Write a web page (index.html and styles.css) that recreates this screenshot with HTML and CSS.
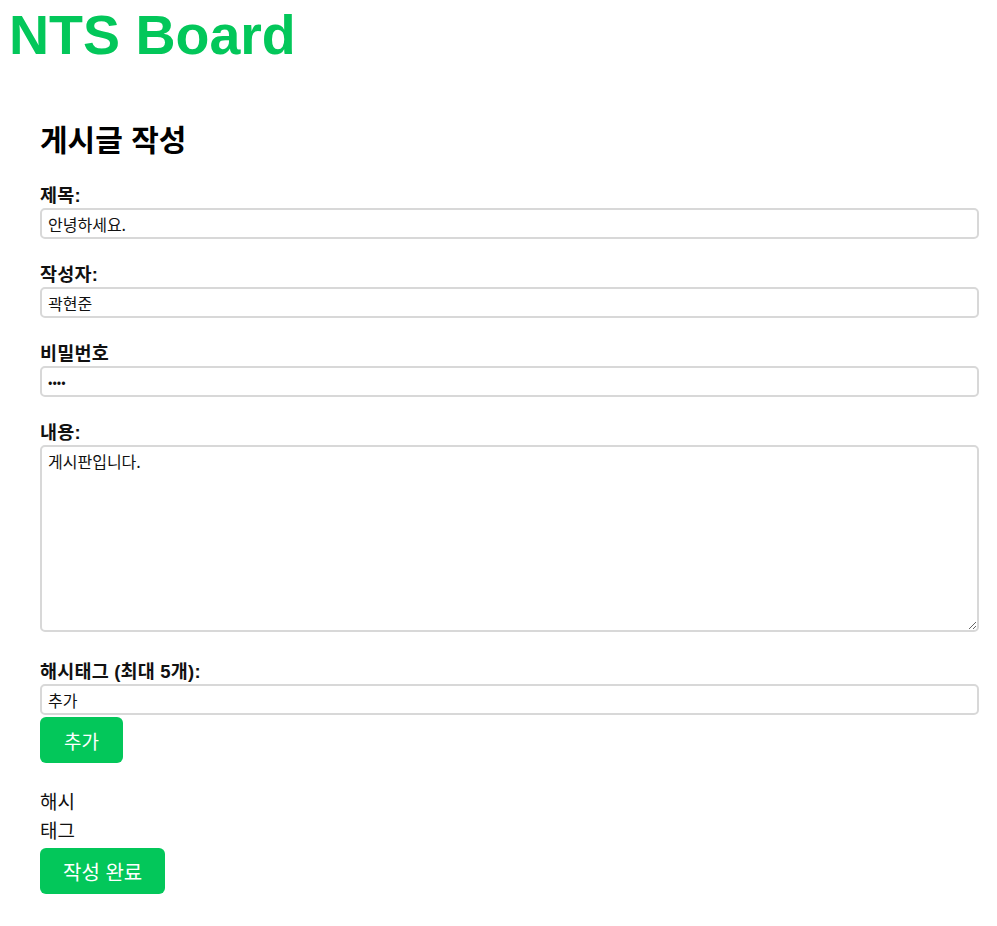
FILE: index.html
```html
<!DOCTYPE html>
<html lang="ko">
<head>
<meta charset="utf-8">
<title>NTS Board</title>
<link rel="stylesheet" href="styles.css">
</head>
<body>
<header class="site-header">
  <h1 class="logo">NTS Board</h1>
</header>
<main class="write">
  <h2 class="write-title">게시글 작성</h2>
  <form class="write-form">
    <div class="field">
      <label class="field-label" for="title">제목:</label>
      <input class="field-input" id="title" type="text" value="안녕하세요.">
    </div>
    <div class="field">
      <label class="field-label" for="writer">작성자:</label>
      <input class="field-input" id="writer" type="text" value="곽현준">
    </div>
    <div class="field">
      <label class="field-label" for="pw">비밀번호</label>
      <input class="field-input password" id="pw" type="password" value="1234">
    </div>
    <div class="field content-field">
      <label class="field-label" for="content">내용:</label>
      <textarea class="field-textarea" id="content">게시판입니다.</textarea>
    </div>
    <div class="field tag-field">
      <label class="field-label" for="tag">해시태그 (최대 5개):</label>
      <input class="field-input" id="tag" type="text" value="추가">
      <button class="btn" type="button">추가</button>
    </div>
    <ul class="tag-list">
      <li>해시</li>
      <li>태그</li>
    </ul>
    <button class="btn btn-submit" type="submit">작성 완료</button>
  </form>
</main>
</body>
</html>
```
FILE: styles.css
```css
html, body {
  margin: 0;
  padding: 0;
  background: #fff;
}
body {
  font-family: "Liberation Sans", "Noto Sans CJK KR", sans-serif;
  color: #000;
}
.site-header {
  padding: 4px 0 0 9px;
}
.logo {
  margin: 0;
  font-family: "Liberation Sans", Arial, sans-serif;
  font-size: 55.5px;
  font-weight: bold;
  line-height: 63px;
  color: #03c75a;
}
.write {
  margin: 0 18px 0 40px;
  padding-top: 53px;
}
.write-title {
  margin: 0 0 22px;
  font-size: 30px;
  font-weight: bold;
  line-height: 42px;
}
.write-form {
  display: flex;
  flex-direction: column;
}
.field {
  display: flex;
  flex-direction: column;
  margin-bottom: 24px;
}
.content-field {
  margin-bottom: 28px;
}
.field-label {
  font-size: 18.5px;
  font-weight: bold;
  line-height: 24px;
  letter-spacing: 0.2px;
  color: #111;
}
.field-input,
.field-textarea {
  box-sizing: border-box;
  width: 100%;
  margin: 0;
  border: 2px solid #d8d8d8;
  border-radius: 5px;
  padding: 0 6px;
  font-family: "Noto Sans CJK KR", "Liberation Sans", sans-serif;
  font-size: 16px;
  color: #111;
  background: #fff;
}
.field-input {
  height: 31px;
}
.password {
  font-size: 13px;
}
.field-textarea {
  height: 187px;
  padding: 3px 6px;
  line-height: 22px;
  resize: vertical;
}
.tag-field {
  margin-bottom: 0;
}
.tag-field .field-input {
  margin-bottom: 2px;
}
.btn {
  align-self: flex-start;
  height: 46px;
  padding: 0 24px;
  border: none;
  border-radius: 6px;
  background: #03c75a;
  color: #fff;
  font-family: "Noto Sans CJK KR", "Liberation Sans", sans-serif;
  font-size: 19px;
  cursor: pointer;
}
.btn-submit {
  padding: 0 23px;
  font-size: 20px;
}
.tag-list {
  list-style: none;
  margin: 23px 0 4px;
  padding: 0;
  font-family: "Noto Sans CJK KR", sans-serif;
  font-size: 19px;
  line-height: 29px;
  color: #111;
}
```
